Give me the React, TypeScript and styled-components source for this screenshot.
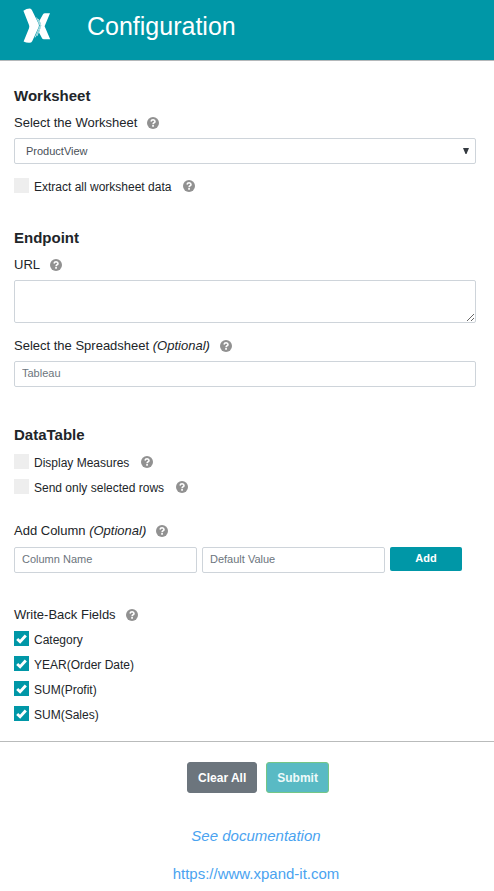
import React from "react";
import styled, { createGlobalStyle } from "styled-components";

const teal = "#0097a7";

const GlobalStyle = createGlobalStyle`
  *, *::before, *::after { box-sizing: border-box; }
  body {
    margin: 0;
    background: #fff;
    color: #212529;
    font-family: "Liberation Sans", Arial, sans-serif;
    font-size: 13px;
    line-height: 20px;
  }
  input, select, textarea, button { font-family: inherit; }
`;

const Header = styled.header`
  display: flex;
  align-items: center;
  gap: 36px;
  height: 61px;
  padding: 0 22px 8px;
  background: ${teal};
  border-bottom: 1px solid #b4b8ba;
  color: #fff;
`;

const Title = styled.h1`
  margin: 0;
  font-size: 25px;
  line-height: 30px;
  font-weight: 400;
`;

const Form = styled.form`
  display: flow-root;
`;

const Section = styled.section`
  margin: 25px 18px 0 14px;
  & + & { margin-top: 30px; }
`;

const Heading = styled.h2`
  margin: 0 0 7px;
  font-size: 15px;
  line-height: 20px;
  font-weight: 700;
`;

const DataSection = styled(Section)`
  && { margin-top: 38px; }
  ${Heading} { margin-bottom: 4px; }
`;

const LabelRow = styled.div<{ $top?: number; $bottom?: number }>`
  display: flex;
  align-items: center;
  gap: 10px;
  margin-top: ${(p) => p.$top ?? 0}px;
  margin-bottom: ${(p) => p.$bottom ?? 5}px;
`;

const CheckRow = styled.div`
  display: flex;
  align-items: center;
  gap: 12px;
  height: 25px;
`;

const CheckLabel = styled.label`
  display: flex;
  align-items: center;
  gap: 5px;
  font-size: 12px;
  line-height: 16px;
`;

const CheckText = styled.span`
  padding-top: 2px;
`;

const Box = styled.span`
  display: grid;
  width: 15px;
  height: 15px;
  > * { grid-area: 1 / 1; }
  svg { pointer-events: none; display: none; }
  input:checked + svg { display: block; }
`;

const Tick = styled.input`
  appearance: none;
  width: 15px;
  height: 15px;
  margin: 0;
  background: #eee;
  &:checked { background: ${teal}; }
`;

const HelpButton = styled.button`
  display: flex;
  padding: 0;
  border: 0;
  background: none;
  color: #919191;
`;

const field = `
  display: block;
  width: 100%;
  min-width: 0;
  margin: 0;
  border: 1px solid #ced4da;
  border-radius: 2px;
  background: #fff;
  color: #495057;
  font-size: 11px;
  line-height: 16px;
`;

const TextInput = styled.input`
  ${field}
  height: 26px;
  padding: 0 7px 2px;
  &::placeholder { color: #6c757d; opacity: 1; }
`;

const TextArea = styled.textarea`
  ${field}
  height: 43px;
  padding: 4px 7px;
  resize: vertical;
`;

const SelectWrap = styled.div`
  display: grid;
  align-items: center;
  margin-bottom: 9px;
  > * { grid-area: 1 / 1; }
  svg { justify-self: end; margin-right: 7px; pointer-events: none; }
`;

const Select = styled.select`
  ${field}
  appearance: none;
  height: 26px;
  padding: 0 20px 0 11px;
`;

const AddRow = styled.div`
  display: grid;
  grid-template-columns: 1fr 1fr 72px;
  align-items: start;
  gap: 5px;
  padding-right: 14px;
`;

const AddButton = styled.button`
  height: 24px;
  padding: 0 0 2px;
  border: 0;
  border-radius: 2px;
  background: ${teal};
  color: #fff;
  font-size: 11px;
  font-weight: 700;
`;

const Footer = styled.footer`
  display: flex;
  flex-direction: column;
  align-items: center;
  margin-top: 15px;
  padding: 20px 0 7px 18px;
  border-top: 1px solid #b9bbbb;
`;

const Actions = styled.div`
  display: flex;
  gap: 9px;
  padding-left: 4px;
  margin-bottom: 33px;
`;

const ActionButton = styled.button<{ $primary?: boolean }>`
  height: 31px;
  padding: 0 10px;
  border: 1px solid ${(p) => (p.$primary ? "#74c686" : "#6c757d")};
  border-radius: 3px;
  background: ${(p) => (p.$primary ? "#59bac4" : "#6c757d")};
  color: ${(p) => (p.$primary ? "#eefafa" : "#fff")};
  font-size: 12px;
  font-weight: 700;
`;

const FooterLink = styled.a<{ $italic?: boolean }>`
  color: #4aa3f0;
  font-size: 15px;
  line-height: 20px;
  font-style: ${(p) => (p.$italic ? "italic" : "normal")};
  text-decoration: none;
  & + & { margin-top: 18px; }
`;

const Logo = () => (
  <svg width="29" height="36" viewBox="0 0 29 36" fill="#fff" aria-hidden="true">
    <path d="M1.4 2.8 Q4.5 .7 7.8 .6 Q9.2 .6 10 2.2 L16.6 15.8 Q17.4 17.8 16.5 19.6 L10.2 33.2 Q9.4 34.9 7 34.8 Q4 34.6 1.6 33.4 L7 20.2 Q7.6 18.6 7 17 Z" />
    <path d="M28 5.2 H23 Q21.6 5.2 20.9 6.5 L17.6 12.6 L19.3 17.6 L17 24.4 L20.2 30.4 Q20.7 31.2 21.8 31.2 H28.2 L22.6 18.2 Z" />
    <path d="M14.6 9.6 L18.2 17.5 L13.2 29.4 M16.4 11 L19 17.7 L15 28" fill="none" stroke="#fff" strokeWidth=".7" />
  </svg>
);

const Help = ({ about }: { about: string }) => (
  <HelpButton type="button" aria-label={`Help: ${about}`}>
    <svg width="12" height="12" viewBox="0 0 12 12" aria-hidden="true">
      <circle cx="6" cy="6" r="6" fill="currentColor" />
      <path d="M4 4.5 Q4.4 2.8 6.1 2.8 Q8 2.9 8 4.4 Q8 5.2 7 5.8 Q6.1 6.3 6.1 7.2" fill="none" stroke="#fff" strokeWidth="1.6" />
      <path d="M5.2 8.1 h1.7 v1.6 h-1.7z" fill="#fff" />
    </svg>
  </HelpButton>
);

const Check = ({ label, checked, help }: { label: string; checked?: boolean; help?: boolean }) => (
  <CheckRow>
    <CheckLabel>
      <Box>
        <Tick type="checkbox" defaultChecked={checked} />
        <svg width="15" height="15" viewBox="0 0 15 15" aria-hidden="true">
          <path d="M3.2 8 L6.1 10.7 L11.8 4.6" fill="none" stroke="#fff" strokeWidth="2.9" />
        </svg>
      </Box>
      <CheckText>{label}</CheckText>
    </CheckLabel>
    {help && <Help about={label} />}
  </CheckRow>
);

const fields = ["Category", "YEAR(Order Date)", "SUM(Profit)", "SUM(Sales)"];

export default function App() {
  return (
    <>
      <GlobalStyle />
      <Header>
        <Logo />
        <Title>Configuration</Title>
      </Header>
      <Form onSubmit={(e) => e.preventDefault()}>
        <Section>
          <Heading>Worksheet</Heading>
          <LabelRow>
            <label htmlFor="worksheet">Select the Worksheet</label>
            <Help about="worksheet" />
          </LabelRow>
          <SelectWrap>
            <Select id="worksheet">
              <option>ProductView</option>
            </Select>
            <svg width="6" height="6" viewBox="0 0 6 6" aria-hidden="true">
              <path d="M0 0H6L3.5 6H2.5Z" fill="#343a40" />
            </svg>
          </SelectWrap>
          <Check label="Extract all worksheet data" help />
        </Section>

        <Section>
          <Heading>Endpoint</Heading>
          <LabelRow>
            <label htmlFor="url">URL</label>
            <Help about="URL" />
          </LabelRow>
          <TextArea id="url" />
          <LabelRow $top={13} $bottom={5}>
            <label htmlFor="spreadsheet">
              Select the Spreadsheet <em>(Optional)</em>
            </label>
            <Help about="spreadsheet" />
          </LabelRow>
          <TextInput id="spreadsheet" placeholder="Tableau" />
        </Section>

        <DataSection>
          <Heading>DataTable</Heading>
          <Check label="Display Measures" help />
          <Check label="Send only selected rows" help />
          <LabelRow $top={22} $bottom={6}>
            <label htmlFor="column">
              Add Column <em>(Optional)</em>
            </label>
            <Help about="add column" />
          </LabelRow>
          <AddRow>
            <TextInput id="column" placeholder="Column Name" />
            <TextInput aria-label="Default Value" placeholder="Default Value" />
            <AddButton type="button">Add</AddButton>
          </AddRow>
          <LabelRow $top={32} $bottom={1}>
            <span>Write-Back Fields</span>
            <Help about="write-back fields" />
          </LabelRow>
          {fields.map((name) => (
            <Check key={name} label={name} checked />
          ))}
        </DataSection>

        <Footer>
          <Actions>
            <ActionButton type="button">Clear All</ActionButton>
            <ActionButton type="submit" $primary>
              Submit
            </ActionButton>
          </Actions>
          <FooterLink href="#documentation" $italic>
            See documentation
          </FooterLink>
          <FooterLink href="https://www.xpand-it.com">https://www.xpand-it.com</FooterLink>
        </Footer>
      </Form>
    </>
  );
}
